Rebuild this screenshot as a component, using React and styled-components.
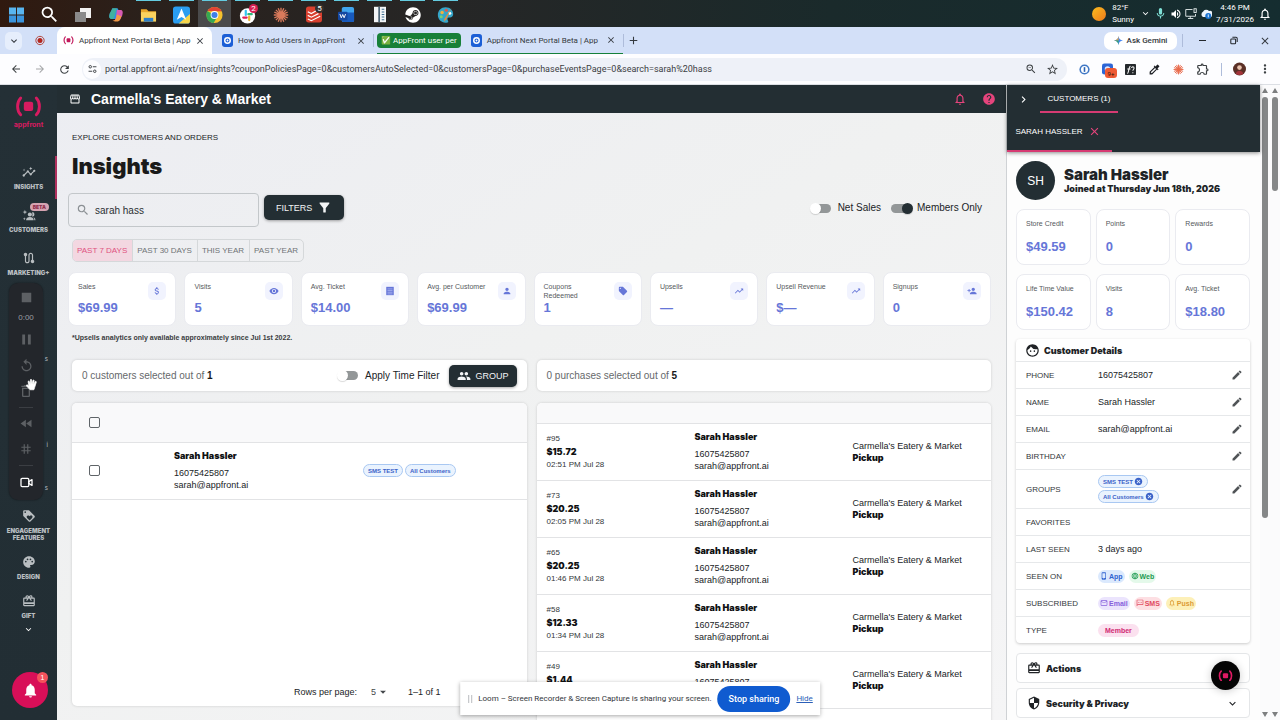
import React, { useState } from "react";
import styled, { createGlobalStyle, css } from "styled-components";
import {
  MdAdd,
  MdArrowBack,
  MdArrowDropDown,
  MdArrowForward,
  MdAttachMoney,
  MdCancel,
  MdCardGiftcard,
  MdChevronRight,
  MdClose,
  MdColorize,
  MdDeleteOutline,
  MdEdit,
  MdExpandMore,
  MdFace,
  MdFastRewind,
  MdFilterAlt,
  MdGrid3X3,
  MdHelp,
  MdInsights,
  MdKeyboardArrowDown,
  MdLanguage,
  MdLocalOffer,
  MdLoyalty,
  MdMailOutline,
  MdMic,
  MdMoreVert,
  MdNotifications,
  MdNotificationsNone,
  MdOutlineExtension,
  MdOutlineSms,
  MdOutlineStorefront,
  MdPalette,
  MdPause,
  MdPeople,
  MdPerson,
  MdPersonAdd,
  MdPhoneIphone,
  MdRefresh,
  MdReplay,
  MdRoute,
  MdSearch,
  MdSecurity,
  MdStarBorder,
  MdStop,
  MdTrendingUp,
  MdVisibility,
  MdVolumeUp,
  MdZoomOut,
} from "react-icons/md";
import { FaSteam } from "react-icons/fa";

const url =
  "portal.appfront.ai/next/insights?couponPoliciesPage=0&customersAutoSelected=0&customersPage=0&purchaseEventsPage=0&search=sarah%20hass";

const stats = [
  { label: "Sales", value: "$69.99", icon: <MdAttachMoney /> },
  { label: "Visits", value: "5", icon: <MdVisibility /> },
  { label: "Avg. Ticket", value: "$14.00", icon: <ReceiptIcon /> },
  { label: "Avg. per Customer", value: "$69.99", icon: <MdPerson /> },
  { label: "Coupons Redeemed", value: "1", icon: <MdLocalOffer /> },
  { label: "Upsells", value: "—", icon: <MdTrendingUp /> },
  { label: "Upsell Revenue", value: "$—", icon: <MdTrendingUp /> },
  { label: "Signups", value: "0", icon: <MdPersonAdd /> },
];

const purchases = [
  { id: "#95", total: "$15.72", time: "02:51 PM Jul 28" },
  { id: "#73", total: "$20.25", time: "02:05 PM Jul 28" },
  { id: "#65", total: "$20.25", time: "01:46 PM Jul 28" },
  { id: "#58", total: "$12.33", time: "01:34 PM Jul 28" },
  { id: "#49", total: "$1.44", time: "01:12 PM Jul 28" },
];

const customerStats = [
  { label: "Store Credit", value: "$49.59" },
  { label: "Points", value: "0" },
  { label: "Rewards", value: "0" },
  { label: "Life Time Value", value: "$150.42" },
  { label: "Visits", value: "8" },
  { label: "Avg. Ticket", value: "$18.80" },
];

const ranges = ["Past 7 days", "Past 30 days", "This year", "Past year"];

/* ---------- icons ---------- */

function ReceiptIcon() {
  return (
    <svg viewBox="0 0 24 24" width="1em" height="1em">
      <rect x="3" y="2" width="18" height="20" fill="currentColor" />
      <path d="M6 7h12M6 11h12M6 15h12M6 19h12" stroke="#aab2ef" strokeWidth="2" />
    </svg>
  );
}

const BrandMark = ({ size }) => (
  <svg viewBox="0 0 26 20" width={size} height={(size * 20) / 26} fill="none">
    <rect x="8.5" y="5.5" width="9" height="9" rx="2" fill="currentColor" />
    <path
      d="M5.5 2C1.500 6 1.500 14 5.500 18M20.500 2C24.500 6 24.500 14 20.500 18"
      stroke="currentColor"
      strokeWidth="2.8"
      strokeLinecap="round"
    />
  </svg>
);

const CustomersIcon = () => (
  <svg viewBox="0 0 24 24" width="14" height="14" fill="currentColor">
    <path d="M5 3l1 3 3 1-3 1-1 3-1-3-3-1 3-1zM4 16l.7 1.8L6.500 18.500l-1.800.7L4 21l-.7-1.800L1.500 18.500l1.800-.7z" />
    <circle cx="13.500" cy="11" r="3.500" />
    <path d="M7 21c0-4 3-5.500 6.500-5.500S20 17 20 21z" />
    <path d="M17 7.600a3.500 3.500 0 110 6.800c1.300-1.800 1.300-5 0-6.800zM19.500 16c2.500.8 3.500 2.500 3.500 5h-1.800c0-2-.5-3.700-1.700-5z" />
  </svg>
);

const WindowsIcon = () => (
  <svg viewBox="0 0 16 16" width="15" height="16">
    <path fill="#59b5f0" d="M0 0h7.500v7.500H0zM8.500 0H16v7.500H8.500z" />
    <path fill="#3a94dd" d="M0 8.500h7.500V16H0zM8.500 8.500H16V16H8.500z" />
  </svg>
);

const TaskViewIcon = () => (
  <svg viewBox="0 0 16 16" width="16" height="16">
    <rect x="5" y="1" width="11" height="10" fill="#f1f1f1" />
    <rect x="0" y="5" width="11" height="10" fill="#8a8a8a" />
  </svg>
);

const CopilotIcon = () => (
  <svg viewBox="0 0 18 18" width="16" height="17" fill="none">
    <path d="M5 2h5c2 0 2 3 1 6l-2 6H4c-3 0-3-3-2-6z" fill="#2f8fe6" />
    <path d="M5 2h5L7 12c-.5 2-1 2-3 2H3C1 13 1 11 2 8z" fill="#46b98f" opacity=".8" />
    <path d="M10 4h4c3 0 3 3 2 6l-2 4c-1 2-2 2-4 2H6c2 0 2-1 3-4z" fill="#d65bb3" />
    <path d="M10 9l-1 4c-1 3-2 3-4 3l3 1h3c2 0 3-3 4-6z" fill="#f29a45" />
  </svg>
);

const FolderIcon = () => (
  <svg viewBox="0 0 18 18" width="17" height="18">
    <path fill="#e9a82c" d="M1 3h6l2 2h8v4H1z" />
    <path fill="#fbd35f" d="M1 6h16v10H1z" />
    <path fill="#2d7fc9" d="M4 12h10v4H4z" />
  </svg>
);

const PlaneIcon = () => (
  <svg viewBox="0 0 18 18" width="17" height="18">
    <rect width="18" height="18" rx="3" fill="#2a9df1" />
    <path d="M18 8v7a3 3 0 01-3 3H6z" fill="#f7d54a" />
    <path d="M9 2l5 12-5-3-5 3z" fill="#fff" />
  </svg>
);

const ChromeIcon = () => (
  <svg viewBox="0 0 20 20" width="17" height="18">
    <circle cx="10" cy="10" r="9.500" fill="#f6c22d" />
    <path d="M1.800 5.200a9.500 9.500 0 0116.400 0L10 5.500z" fill="#e24335" />
    <path d="M10 5.500h8.400A9.500 9.500 0 0018 5z" fill="#e24335" />
    <path d="M1.800 5.200A9.500 9.500 0 009 19.500l4-7z" fill="#35a853" />
    <circle cx="10" cy="10" r="4.600" fill="#fff" />
    <circle cx="10" cy="10" r="3.600" fill="#3f7fe8" />
  </svg>
);

const SlackIcon = () => (
  <svg viewBox="0 0 20 20" width="17" height="18">
    <circle cx="10" cy="11" r="9" fill="#fff" />
    <g strokeWidth="2.600" strokeLinecap="round">
      <path d="M8 5v5" stroke="#36c5f0" />
      <path d="M11 9h4" stroke="#2eb67d" />
      <path d="M12 12v4" stroke="#ecb22e" />
      <path d="M5 13h4" stroke="#e01e5a" />
    </g>
  </svg>
);

const Burst = ({ size, color }) => (
  <svg viewBox="0 0 20 20" width={size} height={size} stroke={color} strokeWidth="1.700">
    <path d="M10 1v18M1 10h18M3.600 3.600l12.800 12.800M16.400 3.600L3.600 16.400M6.500 1.700l7 16.600M13.500 1.700l-7 16.600M1.700 6.500l16.600 7M1.700 13.500l16.600-7" />
  </svg>
);

const TodoIcon = () => (
  <svg viewBox="0 0 18 18" width="16" height="17">
    <rect width="18" height="18" rx="3" fill="#d8402f" />
    <path d="M2 6l4 2 7-4M2 10l4 2 8-4M2 14l4 2 10-5" stroke="#fff" strokeWidth="1.300" fill="none" />
  </svg>
);

const WordIcon = () => (
  <svg viewBox="0 0 18 18" width="17" height="17">
    <rect x="4" y="1" width="13" height="16" rx="2" fill="#41a5ee" />
    <path d="M4 7h13v8a2 2 0 01-2 2H6a2 2 0 01-2-2z" fill="#185abd" />
    <rect x="0" y="6" width="10" height="9" rx="1" fill="#1447a0" />
    <path d="M2 8.500l1.500 4L5 9l1.500 3.500 1.500-4" stroke="#fff" strokeWidth="1" fill="none" />
  </svg>
);

const LedgerIcon = () => (
  <svg viewBox="0 0 14 18" width="12" height="17">
    <rect width="14" height="18" fill="#f2f4f6" />
    <rect x="5" width="2" height="18" fill="#4d6577" />
    <path d="M9 3h3M9 6h3M9 9h3M9 12h3M9 15h3" stroke="#3c6d8f" strokeWidth="1.200" />
  </svg>
);

const PaintIcon = () => (
  <svg viewBox="0 0 20 20" width="17" height="18">
    <path d="M10 1c6 0 9 4 9 8 0 3-3 4-5 4s-2 2-1 4-1 2-3 2c-5 0-9-4-9-9s4-9 9-9z" fill="#35a6c9" />
    <circle cx="6" cy="7" r="2" fill="#f2b13d" />
    <circle cx="11" cy="4.500" r="1.800" fill="#e6554a" />
    <circle cx="15" cy="8" r="1.800" fill="#fff" />
    <circle cx="5" cy="12" r="1.800" fill="#7bd070" />
    <path d="M17 2L9 14l-1 4 3-3z" fill="#e9893a" />
  </svg>
);

const MonitorIcon = () => (
  <svg viewBox="0 0 16 16" width="12" height="14" fill="none" stroke="#e8eeee" strokeWidth="1.200">
    <path d="M10 2H1v9h13V8M7 11v3M4 14h7" />
    <rect x="12" y="1" width="3" height="5" />
  </svg>
);

const CloudIcon = () => (
  <svg viewBox="0 0 16 14" width="12" height="12">
    <path d="M4 11a4 4 0 010-7 5 5 0 018-1 4 4 0 012 8z" fill="#eef4fb" />
    <circle cx="11" cy="9.500" r="4" fill="#1a73d0" />
    <path d="M11 7.500v4" stroke="#fff" strokeWidth="1.200" />
  </svg>
);

const TuneIcon = () => (
  <svg viewBox="0 0 16 16" width="9" height="10" fill="none" stroke="#3c4043" strokeWidth="1.700">
    <circle cx="4" cy="4" r="2.200" />
    <path d="M8.500 4H15M1 12h6.500" />
    <circle cx="12" cy="12" r="2.200" />
  </svg>
);

const HelpTabIcon = () => (
  <svg viewBox="0 0 12 14" width="11" height="13">
    <rect width="12" height="14" rx="3" fill="#1c5fd6" />
    <circle cx="6" cy="7" r="3" fill="none" stroke="#fff" strokeWidth="1.600" />
    <circle cx="6" cy="7" r="1" fill="#fff" />
  </svg>
);

const RecordIcon = () => (
  <svg viewBox="0 0 12 12" width="10" height="11">
    <circle cx="6" cy="6" r="5" fill="none" stroke="#b3473f" strokeWidth="1.200" />
    <circle cx="6" cy="6" r="3" fill="#b3261e" />
  </svg>
);

const GeminiIcon = () => (
  <svg viewBox="0 0 16 16" width="9" height="11">
    <path d="M8 0c.5 5 3 7.500 8 8-5 .5-7.500 3-8 8-.5-5-3-7.500-8-8 5-.5 7.500-3 8-8z" fill="#4285f4" />
    <path d="M8 0c-.5 5-3 7.500-8 8l8 0z" fill="#e8a33b" />
    <path d="M0 8c5 .5 7.500 3 8 8V8z" fill="#35a567" />
  </svg>
);

const RestoreIcon = () => (
  <svg viewBox="0 0 10 10" width="8" height="9" fill="none" stroke="#23272c" strokeWidth="1.300">
    <rect x="1" y="3" width="6" height="6" rx="1" />
    <path d="M3 1h4.500A1.500 1.500 0 019 2.500V7" />
  </svg>
);

const KeyIcon = () => (
  <svg viewBox="0 0 14 14" width="11" height="13">
    <circle cx="7" cy="7" r="6.500" fill="#3f77c5" />
    <circle cx="7" cy="7" r="4.500" fill="#fff" />
    <path d="M7 4v6" stroke="#2a62b4" strokeWidth="2" />
  </svg>
);

const FontIcon = () => (
  <svg viewBox="0 0 14 14" width="11" height="13" fill="none" stroke="#fff" strokeWidth="1.300">
    <rect width="14" height="14" rx="1" fill="#24282c" stroke="none" />
    <path d="M3 12c2 0 1.500-9 4-9M3 6.500h4M8.500 5c0-2 3-2 3 0S10 7 10 8.500M10 10.500v1.200" />
  </svg>
);

const BlueExtensionIcon = () => (
  <svg viewBox="0 0 14 14" width="11" height="12">
    <rect width="14" height="14" rx="3" fill="#2d66d6" />
    <circle cx="7" cy="7" r="3.500" fill="#dfe9ff" />
  </svg>
);

const PortraitIcon = () => (
  <svg viewBox="0 0 14 14" width="13" height="14">
    <circle cx="7" cy="7" r="7" fill="#5a2f26" />
    <circle cx="7" cy="5.500" r="2.500" fill="#e8c2ad" />
    <path d="M3 12c1-4 7-4 8 0-2 2-6 2-8 0z" fill="#a3343a" />
  </svg>
);

const CameraIcon = () => (
  <svg viewBox="0 0 14 12" width="13" height="11" fill="none" stroke="currentColor" strokeWidth="1.400">
    <rect x="1" y="1.500" width="8.500" height="9" rx="1.200" />
    <path d="M9.500 5l3.500-2.200v6.400L9.500 7z" strokeLinejoin="round" />
  </svg>
);

const HandCursor = () => (
  <svg viewBox="0 0 16 16" width="12" height="13">
    <path
      d="M5.500 15l-4.800-5c-.9-1.100.6-2 1.500-1.200L4 10.200 2.800 4.500c-.2-1.300 1.300-1.500 1.600-.4L5.500 8 5.800 2c.1-1.200 1.600-1.200 1.700 0L8 7.500 9.300 2.600c.3-1.100 1.700-.8 1.600.4L10.200 8l2-3.700c.6-1 1.900-.4 1.500.7L11.500 12l-1 3z"
      fill="#fff"
      stroke="#fff"
      strokeWidth="1"
    />
  </svg>
);

/* ---------- app ---------- */

const App = () => (
  <Desktop>
    <GlobalStyle />
    <Taskbar />
    <TabStrip />
    <AddressBar />
    <Portal>
      <Sidebar />
      <Insights />
      <CustomerPanel />
      <Scrollbars>
        <Track>
          <Thumb $share={67} />
        </Track>
        <Track>
          <Thumb $share={15} />
        </Track>
      </Scrollbars>
    </Portal>
    <Recorder />
    <ShareBar />
  </Desktop>
);

const Taskbar = () => (
  <TaskbarWrapper>
    <TaskApp><WindowsIcon /></TaskApp>
    <TaskApp><MdSearch size={21} /></TaskApp>
    <TaskApp><TaskViewIcon /></TaskApp>
    <TaskApp><CopilotIcon /></TaskApp>
    <TaskApp $open><FolderIcon /></TaskApp>
    <TaskApp $open><PlaneIcon /></TaskApp>
    <TaskApp $open $active><ChromeIcon /></TaskApp>
    <TaskApp $open><SlackIcon /><TaskBadge $fill="#d81f52">2</TaskBadge></TaskApp>
    <TaskApp $open><Burst size={16} color="#d97a5b" /></TaskApp>
    <TaskApp $open><TodoIcon /><TaskBadge $fill="#33302e">5</TaskBadge></TaskApp>
    <TaskApp $open><WordIcon /></TaskApp>
    <TaskApp $open><LedgerIcon /></TaskApp>
    <TaskApp $open><FaSteam size={16} /></TaskApp>
    <TaskApp $open><PaintIcon /></TaskApp>
    <Tray>
      <Sun />
      <TrayText>82°F<br />Sunny</TrayText>
      <MdKeyboardArrowDown size={11} />
      <MdMic size={13} color="#7fe0d6" />
      <MdVolumeUp size={12} />
      <MonitorIcon />
      <CloudIcon />
      <TrayText $center>4:46 PM<br />7/31/2026</TrayText>
      <MdNotificationsNone size={14} />
    </Tray>
  </TaskbarWrapper>
);

const TabStrip = () => (
  <TabStripWrapper>
    <TabMenu aria-label="Search tabs"><MdKeyboardArrowDown size={12} /></TabMenu>
    <PinnedTab aria-label="Recording"><RecordIcon /></PinnedTab>
    <BrowserTab $active $width={155}>
      <TabIcon><BrandMark size={11} /></TabIcon>
      <TabTitle>Appfront Next Portal Beta | App</TabTitle>
      <MdClose size={10} />
    </BrowserTab>
    <BrowserTab $width={161}>
      <HelpTabIcon />
      <TabTitle>How to Add Users in AppFront</TabTitle>
      <MdClose size={10} />
    </BrowserTab>
    <Separator />
    <TabGroup>
      <GroupLabel>✅ AppFront user per</GroupLabel>
      <BrowserTab $width={162}>
        <HelpTabIcon />
        <TabTitle>Appfront Next Portal Beta | App</TabTitle>
        <MdClose size={10} />
      </BrowserTab>
    </TabGroup>
    <Separator />
    <PinnedTab aria-label="New tab"><MdAdd size={13} /></PinnedTab>
    <WindowControls>
      <GeminiButton><GeminiIcon /> Ask Gemini</GeminiButton>
      <Separator />
      <WindowButton aria-label="Minimize"><MinimizeLine /></WindowButton>
      <WindowButton aria-label="Restore"><RestoreIcon /></WindowButton>
      <WindowButton aria-label="Close"><MdClose size={12} /></WindowButton>
    </WindowControls>
  </TabStripWrapper>
);

const AddressBar = () => (
  <AddressBarWrapper>
    <ToolButton aria-label="Back"><MdArrowBack size={12} /></ToolButton>
    <ToolButton aria-label="Forward" disabled><MdArrowForward size={12} /></ToolButton>
    <ToolButton aria-label="Reload"><MdRefresh size={13} /></ToolButton>
    <UrlPill>
      <SiteInfo><TuneIcon /></SiteInfo>
      <UrlInput aria-label="Address" defaultValue={url} />
      <MdZoomOut size={12} />
      <MdStarBorder size={13} />
    </UrlPill>
    <Extensions>
      <KeyIcon />
      <BadgeHolder>
        <BlueExtensionIcon />
        <ExtensionBadge>9+</ExtensionBadge>
      </BadgeHolder>
      <FontIcon />
      <MdColorize size={13} color="#1c1f24" />
      <Burst size={11} color="#e8694a" />
      <MdOutlineExtension size={14} />
      <Separator />
      <PortraitIcon />
      <MdMoreVert size={14} />
    </Extensions>
  </AddressBarWrapper>
);

const Sidebar = () => (
  <SidebarWrapper>
    <Brand href="#home">
      <BrandMark size={27} />
      <span>appfront</span>
    </Brand>
    <NavLink href="#insights" $active>
      <MdInsights size={14} />
      Insights
    </NavLink>
    <NavLink href="#customers">
      <CustomersIcon />
      Customers
      <Beta>BETA</Beta>
    </NavLink>
    <NavLink href="#marketing">
      <MdRoute size={14} />
      Marketing+
    </NavLink>
    <NavSlot />
    <NavSlot>s</NavSlot>
    <NavSlot />
    <NavSlot>i</NavSlot>
    <NavSlot>s</NavSlot>
    <NavLink href="#engagement" $size="tall">
      <MdLoyalty size={14} />
      Engagement Features
    </NavLink>
    <NavLink href="#design" $size="short">
      <MdPalette size={14} />
      Design
    </NavLink>
    <NavLink href="#gift" $size="short">
      <MdCardGiftcard size={14} />
      Gift
    </NavLink>
    <MoreButton aria-label="More"><MdExpandMore size={11} /></MoreButton>
    <AlertButton aria-label="Notifications">
      <MdNotifications size={17} />
      <AlertCount>1</AlertCount>
    </AlertButton>
  </SidebarWrapper>
);

const Insights = () => {
  const [range, setRange] = useState(ranges[0]);

  return (
    <MainWrapper>
      <Header>
        <MdOutlineStorefront size={12} />
        <StoreName>Carmella's Eatery &amp; Market</StoreName>
        <HeaderButton aria-label="Alerts"><MdNotificationsNone size={14} /></HeaderButton>
        <HeaderButton aria-label="Help"><MdHelp size={14} /></HeaderButton>
      </Header>
      <Content>
        <Eyebrow>Explore customers and orders</Eyebrow>
        <Title>Insights</Title>
        <SearchRow>
          <SearchBox>
            <MdSearch size={14} />
            <input type="text" aria-label="Search" defaultValue="sarah hass" />
          </SearchBox>
          <DarkButton>FILTERS <MdFilterAlt size={15} /></DarkButton>
          <Switches>
            <SwitchField label="Net Sales" />
            <SwitchField label="Members Only" defaultChecked />
          </Switches>
        </SearchRow>
        <RangeGroup>
          {ranges.map((item) => (
            <RangeButton key={item} $active={item === range} onClick={() => setRange(item)}>
              {item}
            </RangeButton>
          ))}
        </RangeGroup>
        <StatGrid>
          {stats.map((stat) => (
            <StatCard key={stat.label}>
              <StatTop>
                <StatLabel>{stat.label}</StatLabel>
                <StatIcon>{stat.icon}</StatIcon>
              </StatTop>
              <StatValue>{stat.value}</StatValue>
            </StatCard>
          ))}
        </StatGrid>
        <Footnote>*Upsells analytics only available approximately since Jul 1st 2022.</Footnote>
        <Columns>
          <Column>
            <SummaryBar>
              <p>0 customers selected out of <b>1</b></p>
              <SwitchField label="Apply Time Filter" />
              <DarkButton $compact><MdPeople size={14} /> GROUP</DarkButton>
            </SummaryBar>
            <CustomerList />
          </Column>
          <Column>
            <SummaryBar>
              <p>0 purchases selected out of <b>5</b></p>
            </SummaryBar>
            <PurchaseList />
          </Column>
        </Columns>
      </Content>
    </MainWrapper>
  );
};

const SwitchField = ({ label, defaultChecked }) => (
  <SwitchLabel>
    <SwitchInput type="checkbox" defaultChecked={defaultChecked} />
    {label}
  </SwitchLabel>
);

const Person = () => (
  <>
    <Strong>Sarah Hassler</Strong>
    <Line $gap>16075425807</Line>
    <Line>sarah@appfront.ai</Line>
  </>
);

const CustomerList = () => (
  <ListCard $fill>
    <Table>
      <colgroup>
        <col width="92" />
        <col width="189" />
        <col />
      </colgroup>
      <thead>
        <HeadRow $tall>
          <CheckCell as="th"><CheckBox type="checkbox" aria-label="Select all customers" /></CheckCell>
          <th />
          <th />
        </HeadRow>
      </thead>
      <tbody>
        <Row>
          <CheckCell><CheckBox type="checkbox" aria-label="Select Sarah Hassler" /></CheckCell>
          <td><Person /></td>
          <td>
            <TagRow>
              <Tag>SMS TEST</Tag>
              <Tag>All Customers</Tag>
            </TagRow>
          </td>
        </Row>
      </tbody>
    </Table>
    <Pager>
      <label htmlFor="rows-per-page">Rows per page:</label>
      <SelectHolder>
        <select id="rows-per-page" defaultValue="5">
          <option>5</option>
          <option>10</option>
        </select>
        <MdArrowDropDown size={14} />
      </SelectHolder>
      <span>1–1 of 1</span>
    </Pager>
  </ListCard>
);

const PurchaseList = () => (
  <ListCard>
    <Table>
      <colgroup>
        <col width="148" />
        <col width="158" />
        <col />
      </colgroup>
      <thead>
        <HeadRow>
          <th />
          <th />
          <th />
        </HeadRow>
      </thead>
      <tbody>
        {purchases.map((item) => (
          <Row key={item.id}>
            <td>
              <Small>{item.id}</Small>
              <Strong>{item.total}</Strong>
              <Small>{item.time}</Small>
            </td>
            <td><Person /></td>
            <td>
              <Line>Carmella's Eatery &amp; Market</Line>
              <Strong>Pickup</Strong>
            </td>
          </Row>
        ))}
      </tbody>
    </Table>
  </ListCard>
);

const Detail = ({ name, editable, stacked, children }) => (
  <DetailRow $stacked={stacked}>
    <dt>{name}</dt>
    <dd>{children}</dd>
    {editable && (
      <EditButton aria-label={`Edit ${name}`}><MdEdit size={12} /></EditButton>
    )}
  </DetailRow>
);

const CustomerPanel = () => (
  <PanelWrapper>
    <PanelTabs>
      <PanelTabRow>
        <CollapseButton aria-label="Collapse"><MdChevronRight size={13} /></CollapseButton>
        <PanelTab>CUSTOMERS (1)</PanelTab>
      </PanelTabRow>
      <PanelTabRow $tall>
        <PanelTab $wide>SARAH HASSLER <MdClose size={13} color="#e5447c" /></PanelTab>
      </PanelTabRow>
    </PanelTabs>
    <PanelBody>
      <Profile>
        <Avatar>SH</Avatar>
        <div>
          <ProfileName>Sarah Hassler</ProfileName>
          <Joined>Joined at Thursday Jun 18th, 2026</Joined>
        </div>
      </Profile>
      <PanelStats>
        {customerStats.map((stat) => (
          <StatCard key={stat.label} $flat>
            <StatLabel>{stat.label}</StatLabel>
            <StatValue>{stat.value}</StatValue>
          </StatCard>
        ))}
      </PanelStats>
      <DetailsCard>
        <SectionTitle><MdFace size={15} /> Customer Details</SectionTitle>
        <dl>
          <Detail name="PHONE" editable>16075425807</Detail>
          <Detail name="NAME" editable>Sarah Hassler</Detail>
          <Detail name="EMAIL" editable>sarah@appfront.ai</Detail>
          <Detail name="BIRTHDAY" editable />
          <Detail name="GROUPS" editable stacked>
            <Tag>SMS TEST <MdCancel size={9} /></Tag>
            <Tag>All Customers <MdCancel size={9} /></Tag>
          </Detail>
          <Detail name="FAVORITES" />
          <Detail name="LAST SEEN">3 days ago</Detail>
          <Detail name="SEEN ON">
            <Chip $fill="#dbe9fd" $ink="#2f62d0"><MdPhoneIphone size={8} /> App</Chip>
            <Chip $fill="#e4f9ea" $ink="#1d9a50"><MdLanguage size={8} /> Web</Chip>
          </Detail>
          <Detail name="SUBSCRIBED">
            <Chip $fill="#ebe4fd" $ink="#8660dc"><MdMailOutline size={8} />Email</Chip>
            <Chip $fill="#fddfe3" $ink="#e04a5f"><MdOutlineSms size={8} />SMS</Chip>
            <Chip $fill="#fdf0b8" $ink="#dc9a34"><MdNotificationsNone size={8} />Push</Chip>
          </Detail>
          <Detail name="TYPE">
            <Chip $fill="#fbe1ef" $ink="#d02a72" $roomy>Member</Chip>
          </Detail>
        </dl>
      </DetailsCard>
      <FoldCard><MdCardGiftcard size={14} /> Actions</FoldCard>
      <FoldCard>
        <MdSecurity size={14} /> Security &amp; Privacy
        <MdExpandMore size={13} />
      </FoldCard>
    </PanelBody>
    <ChatButton aria-label="Open chat"><BrandMark size={15} /></ChatButton>
  </PanelWrapper>
);

const Recorder = () => (
  <RecorderWrapper>
    <button aria-label="Stop"><MdStop size={19} /></button>
    <time>0:00</time>
    <button aria-label="Pause"><MdPause size={17} /></button>
    <button aria-label="Restart"><MdReplay size={15} /></button>
    <button aria-label="Delete"><MdDeleteOutline size={16} /></button>
    <hr />
    <button aria-label="Rewind"><MdFastRewind size={15} /></button>
    <button aria-label="Effects"><MdGrid3X3 size={14} /></button>
    <hr />
    <RecorderCamera aria-label="Camera"><CameraIcon /></RecorderCamera>
    <Pointer><HandCursor /></Pointer>
  </RecorderWrapper>
);

const ShareBar = () => (
  <ShareBarWrapper>
    <Grip />
    <span>Loom – Screen Recorder &amp; Screen Capture is sharing your screen.</span>
    <StopButton>Stop sharing</StopButton>
    <a href="#hide">Hide</a>
  </ShareBarWrapper>
);

/* ---------- styles ---------- */

const GlobalStyle = createGlobalStyle`
  :root {
    --dark: #232e33;
    --pink: #e5447c;
    --blue: #6676d8;
    --line: #e2e3e5;
    --heavy: "Arial Black", Inter, "Liberation Sans", sans-serif;
    --system: Roboto, "Noto Sans", sans-serif;
  }
  *, *::before, *::after {
    box-sizing: border-box;
  }
  body {
    margin: 0;
    overflow: hidden;
    font-family: "Liberation Sans", Arial, sans-serif;
    color: #202326;
  }
  button, input, select {
    font: inherit;
    color: inherit;
    border: 0;
    padding: 0;
    margin: 0;
    background: none;
  }
  p, h1, h2, h3, dl, dd {
    margin: 0;
  }
  a {
    color: inherit;
    text-decoration: none;
  }
  svg {
    flex: none;
  }
`;

const center = css`
  display: flex;
  align-items: center;
  justify-content: center;
`;

const Desktop = styled.div`
  position: relative;
  display: flex;
  flex-direction: column;
  height: 100vh;
  overflow: hidden;
`;

const TaskbarWrapper = styled.div`
  display: flex;
  height: 27px;
  color: #fff;
  font-family: var(--system);
  background: linear-gradient(90deg, #30190f 0%, #2a211c 12%, #262626 35%, #1a2a2b 65%, #152d30 100%);
`;

const TaskApp = styled.div`
  ${center}
  position: relative;
  width: 33px;
  border-top: 2px solid transparent;
  ${(props) => props.$active && "background: #4a4a4b;"}
  &::before {
    content: "";
    position: absolute;
    top: -2px;
    width: 25px;
    height: 1px;
    background: ${(props) => (props.$open ? "#64cbe0" : "none")};
  }
`;

const TaskBadge = styled.span`
  ${center}
  position: absolute;
  top: 2px;
  right: 6px;
  width: 9px;
  height: 9px;
  border-radius: 50%;
  font-size: 8px;
  background: ${(props) => props.$fill};
`;

const Tray = styled.div`
  display: flex;
  align-items: center;
  gap: 3px;
  margin-left: auto;
  padding-right: 8px;
`;

const Sun = styled.span`
  width: 14px;
  height: 14px;
  border-radius: 50%;
  background: linear-gradient(135deg, #fbbd1e, #ee7a1c);
`;

const TrayText = styled.span`
  margin: 0 ${(props) => (props.$center ? 1 : 3)}px;
  font-size: 8px;
  line-height: 12px;
  text-align: ${(props) => (props.$center ? "center" : "left")};
`;

const TabStripWrapper = styled.div`
  display: flex;
  align-items: center;
  height: 27px;
  padding-left: 5px;
  font-family: var(--system);
  font-size: 8px;
  color: #353a40;
  background: #d3e0f8;
`;

const TabMenu = styled.button`
  ${center}
  width: 17px;
  height: 18px;
  border-radius: 5px;
  background: #e6eefc;
`;

const PinnedTab = styled.button`
  ${center}
  width: 20px;
  height: 18px;
  margin-right: 6px;
  ${TabMenu} + & {
    margin: 0 7px 0 8px;
  }
`;

const BrowserTab = styled.div`
  display: flex;
  align-items: center;
  gap: 5px;
  width: ${(props) => props.$width}px;
  height: 27px;
  padding: 0 7px 0 10px;
  ${(props) => props.$active && "background: #fff; border-radius: 8px 8px 0 0; padding-left: 6px;"}
`;

const TabIcon = styled.span`
  ${center}
  color: #c2185b;
`;

const TabTitle = styled.span`
  flex: 1;
  white-space: nowrap;
`;

const Separator = styled.span`
  width: 1px;
  height: 13px;
  background: #aebcda;
`;

const TabGroup = styled.div`
  display: flex;
  align-items: center;
  height: 27px;
  margin-left: 3px;
  border-bottom: 1px solid #15803a;
`;

const GroupLabel = styled.span`
  height: 15px;
  padding: 0 4px;
  border-radius: 4px;
  white-space: nowrap;
  line-height: 15px;
  color: #fff;
  background: #188038;
`;

const WindowControls = styled.div`
  display: flex;
  align-items: center;
  margin-left: auto;
  ${Separator} {
    margin: 0 4px 0 5px;
  }
`;

const GeminiButton = styled.button`
  ${center}
  gap: 4px;
  width: 73px;
  height: 18px;
  border-radius: 7px;
  font-size: 8px;
  font-weight: 500;
  background: #fff;
`;

const WindowButton = styled.button`
  ${center}
  width: 31px;
  height: 27px;
`;

const MinimizeLine = styled.span`
  width: 7px;
  height: 1px;
  background: #23272c;
`;

const AddressBarWrapper = styled.div`
  display: flex;
  align-items: center;
  height: 31px;
  padding: 0 8px;
  font-family: var(--system);
  color: #3c4043;
  background: #fdfdff;
  border-bottom: 1px solid #dcdfe4;
`;

const ToolButton = styled.button`
  ${center}
  width: 24px;
  margin-left: -4px;
  margin-right: 4px;
  &:disabled {
    opacity: 0.45;
  }
`;

const UrlPill = styled.label`
  display: flex;
  flex: 1;
  align-items: center;
  gap: 9px;
  height: 23px;
  margin-left: 2px;
  padding: 0 8px 0 1px;
  border-radius: 12px;
  background: #eef1f8;
`;

const SiteInfo = styled.span`
  ${center}
  width: 18px;
  height: 19px;
  border-radius: 50%;
  margin-right: -5px;
  background: #fdfdff;
`;

const UrlInput = styled.input`
  flex: 1;
  font-size: 9px;
  outline: none;
`;

const Extensions = styled.div`
  display: flex;
  align-items: center;
  gap: 12px;
  margin-left: 12px;
  ${Separator} {
    margin: 0 -1px;
  }
`;

const BadgeHolder = styled.span`
  position: relative;
  display: flex;
`;

const ExtensionBadge = styled.span`
  ${center}
  position: absolute;
  left: 3px;
  top: 5px;
  width: 12px;
  height: 10px;
  border-radius: 3px;
  font-size: 6px;
  color: #2a1208;
  background: #ee5a34;
`;

const Portal = styled.div`
  display: flex;
  flex: 1;
  min-height: 0;
`;

const SidebarWrapper = styled.nav`
  position: relative;
  display: flex;
  flex-direction: column;
  align-items: stretch;
  width: 57px;
  color: #b9bec1;
  background: linear-gradient(#243036, #222e34);
`;

const Brand = styled.a`
  display: flex;
  flex-direction: column;
  align-items: center;
  gap: 4px;
  height: 71px;
  padding-top: 11px;
  font-family: var(--heavy);
  font-size: 7px;
  font-weight: 700;
  line-height: 8px;
  color: #d81b60;
`;

const NavLink = styled.a`
  position: relative;
  display: flex;
  flex-direction: column;
  align-items: center;
  gap: 4px;
  height: ${(props) => (props.$size === "tall" ? 46 : props.$size === "short" ? 39 : 43)}px;
  padding: 9px 4px 0;
  font-family: var(--heavy);
  font-size: 6px;
  font-weight: 900;
  line-height: 7px;
  text-align: center;
  text-transform: uppercase;
  ${(props) => props.$active && "border-right: 2px solid #b0305e; padding-left: 6px;"}
`;

const NavSlot = styled.div`
  height: 43px;
  padding: 27px 9px 0 0;
  font-family: var(--heavy);
  font-size: 6px;
  line-height: 7px;
  text-align: right;
`;

const Beta = styled.span`
  position: absolute;
  top: 4px;
  right: 8px;
  padding: 0 3px;
  border-radius: 5px;
  font-size: 5px;
  line-height: 8px;
  color: #8f2d4c;
  background: #d5a3b1;
`;

const MoreButton = styled.button`
  ${center}
  color: #fff;
`;

const AlertButton = styled.button`
  ${center}
  position: relative;
  width: 36px;
  height: 36px;
  margin: auto 9px 12px 12px;
  border-radius: 50%;
  color: #fff;
  background: #d80f58;
`;

const AlertCount = styled.span`
  ${center}
  position: absolute;
  top: 0;
  right: 0;
  width: 11px;
  height: 11px;
  border-radius: 50%;
  font-size: 7px;
  background: #f4525c;
`;

const MainWrapper = styled.main`
  display: flex;
  flex: 1;
  flex-direction: column;
  min-width: 0;
  background: linear-gradient(150deg, #ecedf2 0%, #f0f1f1 45%, #f5f5f6 100%);
`;

const Header = styled.header`
  display: flex;
  align-items: center;
  height: 28px;
  padding: 0 10px 0 12px;
  color: #fff;
  background: var(--dark);
`;

const StoreName = styled.h2`
  flex: 1;
  margin-left: 10px;
  font-size: 14px;
  line-height: 18px;
`;

const HeaderButton = styled.button`
  display: flex;
  margin-left: 15px;
  color: var(--pink);
`;

const Content = styled.div`
  display: flex;
  flex: 1;
  flex-direction: column;
  min-height: 0;
  padding: 19px 15px 0 11px;
`;

const Eyebrow = styled.p`
  margin-left: 4px;
  font-size: 8px;
  line-height: 12px;
  text-transform: uppercase;
`;

const Title = styled.h1`
  margin: 8px 0 0 4px;
  font-family: var(--heavy);
  font-size: 22px;
  font-weight: 900;
  line-height: 28px;
  color: #1a1a1a;
`;

const SearchRow = styled.div`
  display: flex;
  align-items: flex-start;
  gap: 5px;
  margin-top: 13px;
`;

const SearchBox = styled.label`
  display: flex;
  align-items: center;
  gap: 5px;
  width: 191px;
  height: 34px;
  padding: 0 7px;
  border: 1px solid #c3c7ca;
  border-radius: 4px;
  font-size: 10px;
  color: #8b9094;
  input {
    width: 100%;
    color: #2b2f33;
    outline: none;
  }
`;

const DarkButton = styled.button`
  ${center}
  gap: ${(props) => (props.$compact ? 4 : 5)}px;
  height: ${(props) => (props.$compact ? 22 : 25)}px;
  padding: 0 ${(props) => (props.$compact ? 8 : 12)}px;
  margin-top: ${(props) => (props.$compact ? 0 : 2)}px;
  border-radius: 5px;
  font-size: 9px;
  color: #f3f5f6;
  background: var(--dark);
  box-shadow: 0 1px 3px rgba(0, 0, 0, 0.35);
`;

const Switches = styled.div`
  display: flex;
  gap: 10px;
  margin: 9px 9px 0 auto;
`;

const SwitchLabel = styled.label`
  display: flex;
  align-items: center;
  gap: 7px;
  font-size: 10px;
  line-height: 12px;
`;

const SwitchInput = styled.input`
  appearance: none;
  position: relative;
  width: 19px;
  height: 9px;
  border-radius: 5px;
  background: #939798;
  &::after {
    content: "";
    position: absolute;
    top: -1px;
    left: -2px;
    width: 11px;
    height: 11px;
    border-radius: 50%;
    background: #fff;
    box-shadow: 0 1px 1px rgba(0, 0, 0, 0.15);
  }
  &:checked::after {
    left: 11px;
    background: var(--dark);
  }
`;

const RangeGroup = styled.div`
  display: flex;
  align-self: flex-start;
  margin: 12px 0 0 4px;
  border: 1px solid #d5d8da;
  border-radius: 5px;
  overflow: hidden;
`;

const RangeButton = styled.button`
  height: 21px;
  padding: 0 5px 0 4px;
  font-size: 8px;
  text-transform: uppercase;
  color: ${(props) => (props.$active ? "#e0527f" : "#6f7476")};
  background: ${(props) => (props.$active ? "#f3d7e1" : "none")};
  & + & {
    border-left: 1px solid #d5d8da;
  }
`;

const StatGrid = styled.section`
  display: grid;
  grid-template-columns: repeat(8, 1fr);
  gap: 8px;
  margin-top: 10px;
`;

const StatCard = styled.div`
  display: flex;
  flex-direction: column;
  justify-content: space-between;
  height: ${(props) => (props.$flat ? 56 : 54)}px;
  padding: 9px;
  border: 1px solid #eaebf0;
  border-radius: 8px;
  background: #fff;
`;

const StatTop = styled.div`
  display: flex;
  justify-content: space-between;
  gap: 9px;
  height: 18px;
`;

const StatLabel = styled.span`
  font-size: 7px;
  line-height: 9px;
  color: #55595d;
`;

const StatIcon = styled.span`
  ${center}
  width: 18px;
  height: 18px;
  flex: none;
  border-radius: 5px;
  font-size: 10px;
  color: var(--blue);
  background: #f1f3fe;
`;

const StatValue = styled.strong`
  font-size: 13px;
  line-height: 16px;
  color: var(--blue);
`;

const Footnote = styled.p`
  margin: 6px 0 0 4px;
  font-size: 7px;
  font-weight: 700;
  line-height: 11px;
  color: #3a3d40;
`;

const Columns = styled.div`
  display: flex;
  flex: 1;
  gap: 10px;
  min-height: 0;
  margin: 17px 0 0 4px;
`;

const Column = styled.section`
  display: flex;
  flex: 1;
  flex-direction: column;
  gap: 12px;
  min-width: 0;
`;

const SummaryBar = styled.div`
  display: flex;
  align-items: center;
  gap: 10px;
  flex: none;
  height: 31px;
  padding: 0 10px;
  border-radius: 5px;
  font-size: 10px;
  background: #fff;
  box-shadow: 0 0 3px rgba(0, 0, 0, 0.16);
  p {
    flex: 1;
    color: #66696b;
  }
  b {
    color: #16181a;
  }
`;

const ListCard = styled.div`
  display: flex;
  flex-direction: column;
  flex: ${(props) => (props.$fill ? "1" : "none")};
  margin-bottom: ${(props) => (props.$fill ? 14 : 0)}px;
  padding-bottom: ${(props) => (props.$fill ? 0 : 30)}px;
  border-radius: 5px;
  overflow: hidden;
  background: #fff;
  box-shadow: 0 0 3px rgba(0, 0, 0, 0.16);
`;

const Table = styled.table`
  width: 100%;
  table-layout: fixed;
  border-collapse: collapse;
`;

const HeadRow = styled.tr`
  height: ${(props) => (props.$tall ? 39 : 20)}px;
  background: #f9f9fa;
  border-bottom: 1px solid var(--line);
`;

const Row = styled.tr`
  height: 57px;
  border-bottom: 1px solid var(--line);
  td {
    padding: 0 0 0 10px;
  }
`;

const CheckCell = styled.td`
  && {
    padding: 0 0 0 17px;
  }
`;

const CheckBox = styled.input`
  appearance: none;
  display: block;
  width: 11px;
  height: 11px;
  border: 1px solid #5f6468;
  border-radius: 2px;
`;

const Strong = styled.div`
  font-family: var(--heavy);
  font-size: 9px;
  font-weight: 900;
  line-height: 12px;
  color: #0f1112;
`;

const Line = styled.div`
  margin-top: ${(props) => (props.$gap ? 5 : 0)}px;
  font-size: 9px;
  line-height: 12px;
`;

const Small = styled.div`
  font-size: 8px;
  line-height: 14px;
  color: #33373a;
`;

const TagRow = styled.div`
  display: flex;
  gap: 2px;
`;

const Tag = styled.span`
  display: inline-flex;
  align-items: center;
  gap: 1px;
  height: 13px;
  padding: 0 4px;
  border: 1px solid #a9c8f2;
  border-radius: 7px;
  font-size: 6px;
  font-weight: 700;
  white-space: nowrap;
  color: #3b62c8;
  background: #eaf3fe;
`;

const Pager = styled.div`
  display: flex;
  align-items: center;
  gap: 14px;
  margin: auto 86px 7px auto;
  font-size: 9px;
  line-height: 14px;
`;

const SelectHolder = styled.span`
  display: flex;
  align-items: center;
  margin-right: 4px;
  color: #44484b;
  select {
    appearance: none;
    width: 5px;
    outline: none;
  }
`;

const PanelWrapper = styled.aside`
  position: relative;
  display: flex;
  flex-direction: column;
  width: 254px;
  border-left: 1px solid #cfd2d5;
  background: #fdfdfd;
`;

const PanelTabs = styled.div`
  flex: none;
  color: #fff;
  background: var(--dark);
  box-shadow: 0 1px 4px rgba(0, 0, 0, 0.45);
`;

const PanelTabRow = styled.div`
  display: flex;
  height: ${(props) => (props.$tall ? 39 : 28)}px;
`;

const CollapseButton = styled.button`
  ${center}
  width: 33px;
`;

const PanelTab = styled.button`
  ${center}
  gap: 5px;
  min-width: ${(props) => (props.$wide ? 105 : 78)}px;
  padding-right: ${(props) => (props.$wide ? 3 : 0)}px;
  border-bottom: 2px solid #d63b73;
  font-size: 8px;
`;

const PanelBody = styled.div`
  display: flex;
  flex-direction: column;
  flex: 1;
  min-height: 0;
  padding: 9px 10px 0 9px;
  overflow: hidden;
`;

const Profile = styled.div`
  display: flex;
  align-items: center;
  gap: 9px;
`;

const Avatar = styled.span`
  ${center}
  width: 39px;
  height: 39px;
  border-radius: 50%;
  font-size: 12px;
  color: #fff;
  background: var(--dark);
`;

const ProfileName = styled.h2`
  font-family: var(--heavy);
  font-size: 15px;
  font-weight: 900;
  line-height: 17px;
`;

const Joined = styled.p`
  font-family: var(--heavy);
  font-size: 9px;
  font-weight: 900;
  line-height: 12px;
`;

const PanelStats = styled.div`
  display: grid;
  grid-template-columns: repeat(3, 1fr);
  gap: 9px 5px;
  margin-top: 9px;
`;

const DetailsCard = styled.section`
  flex: none;
  margin-top: 9px;
  border-radius: 4px;
  background: #fff;
  box-shadow: 0 1px 3px rgba(0, 0, 0, 0.2);
`;

const SectionTitle = styled.h3`
  display: flex;
  align-items: center;
  gap: 4px;
  height: 22px;
  padding-left: 9px;
  font-family: var(--heavy);
  font-size: 9px;
  font-weight: 900;
`;

const DetailRow = styled.div`
  display: flex;
  align-items: center;
  height: ${(props) => (props.$stacked ? 39 : 27)}px;
  padding: 0 7px 0 10px;
  border-top: 1px solid #e6e8ea;
  dt {
    flex: 0 0 72px;
    font-size: 8px;
    color: #34383b;
  }
  dd {
    display: flex;
    flex: 1;
    flex-direction: ${(props) => (props.$stacked ? "column" : "row")};
    align-items: flex-start;
    gap: 2px 4px;
    font-size: 9px;
  }
`;

const EditButton = styled.button`
  display: flex;
  color: #505457;
`;

const Chip = styled.span`
  display: inline-flex;
  align-items: center;
  gap: 1px;
  height: 13px;
  padding: 0 ${(props) => (props.$roomy ? 7 : 2)}px;
  border-radius: 7px;
  font-size: 7px;
  font-weight: 700;
  color: ${(props) => props.$ink};
  background: ${(props) => props.$fill};
`;

const FoldCard = styled.button`
  display: flex;
  align-items: center;
  gap: 5px;
  flex: none;
  height: 30px;
  margin-top: 5px;
  padding: 0 10px;
  border: 1px solid #e4e6e8;
  border-radius: 4px;
  font-family: var(--heavy);
  font-size: 9px;
  font-weight: 900;
  background: #fff;
  ${DetailsCard} + & {
    margin-top: 10px;
  }
  svg + svg {
    margin-left: auto;
  }
`;

const ChatButton = styled.button`
  ${center}
  position: absolute;
  right: 20px;
  bottom: 30px;
  width: 29px;
  height: 29px;
  border-radius: 50%;
  color: #e01a64;
  background: #050505;
  box-shadow: 0 1px 8px rgba(0, 0, 0, 0.2);
`;

const Scrollbars = styled.div`
  display: flex;
  width: 20px;
  background: #fbfbfc;
`;

const Track = styled.div`
  display: flex;
  flex: 1;
  flex-direction: column;
  align-items: center;
  padding: 3px 0;
  &::before,
  &::after {
    content: "";
    border: 3px solid transparent;
  }
  &::before {
    border-bottom: 5px solid #7d7f80;
    border-top: 0;
    margin-bottom: 4px;
  }
  &::after {
    border-top: 5px solid #7d7f80;
    border-bottom: 0;
    margin-top: auto;
  }
`;

const Thumb = styled.div`
  width: 6px;
  height: ${(props) => props.$share}%;
  border-radius: 3px;
  background: #858788;
`;

const RecorderWrapper = styled.div`
  position: absolute;
  top: 283px;
  left: 9px;
  display: flex;
  flex-direction: column;
  align-items: center;
  width: 34px;
  height: 217px;
  padding: 5px 0;
  border-radius: 9px;
  font-size: 8px;
  color: #5d6064;
  background: #23262b;
  box-shadow: 0 0 2px rgba(0, 0, 0, 0.5);
  button {
    ${center}
    height: 26px;
  }
  button:first-child {
    height: 20px;
  }
  time {
    line-height: 19px;
    color: #9c9fa2;
  }
  hr {
    width: 14px;
    margin: 3px 0;
    border: 0;
    border-top: 1px solid #3b3e43;
  }
`;

const RecorderCamera = styled.button`
  color: #fff;
`;

const Pointer = styled.span`
  position: absolute;
  top: 95px;
  left: 17px;
`;

const ShareBarWrapper = styled.div`
  position: absolute;
  bottom: 5px;
  left: 50%;
  display: flex;
  align-items: center;
  gap: 6px;
  height: 33px;
  padding: 0 7px 0 8px;
  font-family: var(--system);
  font-size: 8px;
  white-space: nowrap;
  color: #33373b;
  background: #fff;
  box-shadow: 0 1px 4px rgba(0, 0, 0, 0.35);
  transform: translateX(-50%);
  a {
    color: #2b5fb8;
    text-decoration: underline;
  }
`;

const Grip = styled.span`
  width: 4px;
  height: 8px;
  border: solid #b9bcc0;
  border-width: 0 1px;
`;

const StopButton = styled.button`
  height: 26px;
  padding: 0 11px;
  border-radius: 13px;
  font-size: 9px;
  font-weight: 500;
  color: #fff;
  background: #0f5bd0;
`;

export default App;
